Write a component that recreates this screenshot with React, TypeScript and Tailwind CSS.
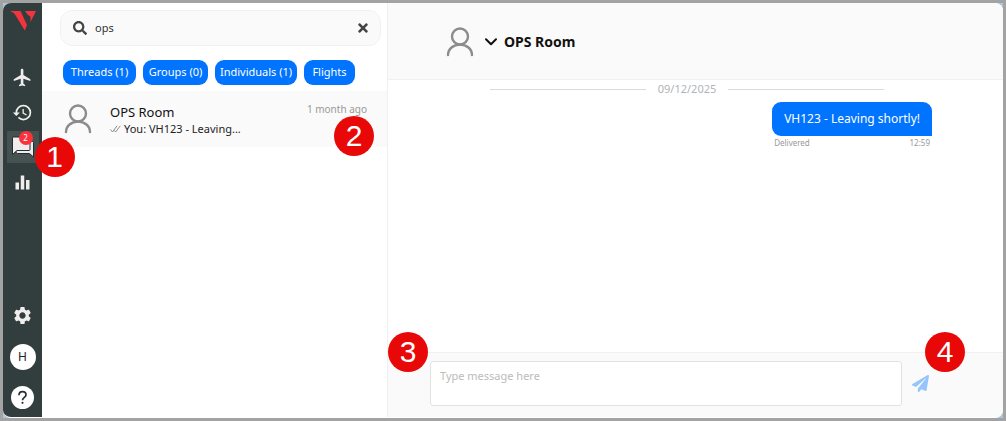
import { type ReactNode } from 'react';
import { MdEqualizer, MdFlight, MdHistory, MdSettings } from 'react-icons/md';
import { FaPaperPlane, FaSearch, FaTimes } from 'react-icons/fa';

const filters = [
  { label: 'Threads (1)', width: 'w-[73px]' },
  { label: 'Groups (0)', width: 'w-[65px]' },
  { label: 'Individuals (1)', width: 'w-[82px]' },
  { label: 'Flights', width: 'w-[51px]' },
];

const Marker = ({ children, className }: { children: ReactNode; className: string }) => (
  <span
    className={`absolute z-10 flex size-10 items-center justify-center rounded-full bg-[#e80808] font-['Liberation_Sans',sans-serif] text-[30px] leading-none text-white ${className}`}
  >
    {children}
  </span>
);

const PersonIcon = () => (
  <svg width="28" height="30" viewBox="0 0 28 30" fill="none" stroke="#8c8c8c" strokeWidth="2.4" strokeLinecap="round" className="shrink-0">
    <circle cx="14" cy="9.5" r="8" />
    <path d="M2 28c0-6.2 5.400-10.400 12-10.400S26 21.800 26 28" />
  </svg>
);

const Logo = () => (
  <svg width="26" height="20" viewBox="0 0 26 20" fill="#f5333f" aria-hidden="true">
    <path d="M0 0h10.500L17 14l-2.200 5.500L5.500 4.200C4.400 2.300 2.800 1.200 0 0z" />
    <path d="M15 0h11l-5.500 11V5.800L17.500 3.500z" />
  </svg>
);

const ChatIcon = () => (
  <svg width="24" height="22" viewBox="0 0 24 22" fill="#f0eeec" stroke="#222b33" strokeWidth="1" strokeLinejoin="round">
    <path d="M5 5.500h16.500q1 0 1 1V21l-4-3.500H6.500q-1.500 0-1.500-1.500z" />
    <path d="M2.500 1h15.500q1 0 1 1v11.500q0 1-1 1H6l-4.500 4V2q0-1 1-1z" />
  </svg>
);

const QuestionIcon = () => (
  <svg width="15" height="15" viewBox="0 0 15 15" fill="none" stroke="#263232" strokeWidth="1.700">
    <path d="M4 5.200C4 3 5.500 1.700 7.500 1.700S11 3 11 4.900c0 2.300-3.500 2.700-3.500 5.300" />
    <circle cx="7.500" cy="12.800" r="1.100" fill="#263232" stroke="none" />
  </svg>
);

const DoubleCheck = () => (
  <svg width="11" height="8" viewBox="0 0 11 8" fill="none" stroke="#8a8a8a" strokeWidth="1" className="shrink-0">
    <path d="M.5 4.500 2.500 7 7 .8M4.500 5.500 5.600 7 10.300.8" />
  </svg>
);

const Sidebar = () => (
  <nav className="flex w-[39px] shrink-0 flex-col items-center bg-[#323e3e] pt-2 pb-2 text-[#f0eeec]">
    <Logo />
    <div className="mt-[30px] flex flex-col items-center gap-[3px]">
      <button title="Flights" className="flex size-8 items-center justify-center">
        <MdFlight size={21} />
      </button>
      <button title="History" className="flex size-8 items-center justify-center">
        <MdHistory size={21} />
      </button>
      <div className="relative">
        <button title="Messages" className="flex size-8 items-center justify-center bg-[#465151]">
          <ChatIcon />
          <span className="absolute top-0 left-3 flex size-[14px] items-center justify-center rounded-full bg-[#fb323c] text-[8px] leading-none text-white">
            2
          </span>
        </button>
        <Marker className="top-[6px] left-7">1</Marker>
      </div>
      <button title="Statistics" className="flex size-8 items-center justify-center">
        <MdEqualizer size={21} />
      </button>
    </div>
    <div className="mt-auto flex flex-col items-center gap-4">
      <button title="Settings" className="pb-[2px]">
        <MdSettings size={21} />
      </button>
      <button
        title="Account"
        className="flex size-[26px] items-center justify-center rounded-full bg-white text-xs text-[#222]"
      >
        H
      </button>
      <button title="Help" className="flex size-[23px] items-center justify-center rounded-full bg-white">
        <QuestionIcon />
      </button>
    </div>
  </nav>
);

const ThreadList = () => (
  <section className="flex w-[346px] shrink-0 flex-col border-r border-[#f0f0f0]">
    <div className="mt-[7px] mr-[6px] ml-[18px] flex h-9 items-center gap-2 rounded-xl border border-[#f1f1f1] bg-[#fafafa] pr-[10px] pl-3">
      <FaSearch size={14} className="shrink-0 text-[#444]" />
      <input
        aria-label="Search"
        defaultValue="ops"
        className="min-w-0 flex-1 bg-transparent text-[11px] text-[#333] outline-none"
      />
      <button title="Clear search">
        <FaTimes size={14} className="text-[#444]" />
      </button>
    </div>

    <div className="mt-[14px] flex gap-[7px] px-[21px]">
      {filters.map((filter) => (
        <button
          key={filter.label}
          className={`h-[25px] rounded-[9px] bg-[#0073ff] text-[11px] whitespace-nowrap text-white ${filter.width}`}
        >
          {filter.label}
        </button>
      ))}
    </div>

    <div className="relative mt-[6px] flex h-14 bg-[#fafafa] pt-[13px] pr-5 pl-[22px]">
      <PersonIcon />
      <div className="ml-[18px] flex flex-1 flex-col">
        <span className="text-[13px] leading-4 text-[#111]">OPS Room</span>
        <span className="flex items-center gap-[3px] text-[11px] leading-[18px] text-[#222]">
          <DoubleCheck />
          You: VH123 - Leaving...
        </span>
      </div>
      <span className="text-[10px] leading-[10px] text-[#999]">1 month ago</span>
      <Marker className="top-[25px] right-[13px]">2</Marker>
    </div>
  </section>
);

const Conversation = () => (
  <main className="flex min-w-0 flex-1 flex-col">
    <header className="flex h-[77px] shrink-0 items-center border-b border-[#f0f0f0] bg-[#fafafa] pt-[2px] pl-[58px]">
      <PersonIcon />
      <button title="Room details" className="ml-[11px]">
        <svg width="12" height="8" viewBox="0 0 12 8" fill="none" stroke="#111" strokeWidth="2" strokeLinecap="round" strokeLinejoin="round">
          <path d="m1 1.200 5 5 5-5" />
        </svg>
      </button>
      <h1 className="ml-[7px] text-sm font-bold text-[#111]">OPS Room</h1>
    </header>

    <div className="flex flex-1 flex-col pr-[71px] pl-[102px]">
      <div className="mr-12 flex items-center gap-3 text-[11px] leading-[18px] text-[#b0b3b8]">
        <span className="h-px flex-1 bg-[#d8dade]" />
        09/12/2025
        <span className="h-px flex-1 bg-[#d8dade]" />
      </div>
      <div className="mt-1 self-end">
        <p className="rounded-[9px] rounded-br-none bg-[#0073ff] px-3 py-2 text-[12px] leading-[18px] text-white">
          VH123 - Leaving shortly!
        </p>
        <div className="flex justify-between px-[2px] text-[8px] leading-[14px] text-[#999]">
          <span>Delivered</span>
          <span>12:59</span>
        </div>
      </div>
    </div>

    <footer className="relative flex h-[65px] shrink-0 items-start border-t border-[#f0f0f0] bg-[#fafafa] pt-2 pl-[42px]">
      <Marker className="-top-[21px] left-0">3</Marker>
      <textarea
        aria-label="Message"
        placeholder="Type message here"
        className="h-[45px] min-w-0 flex-1 resize-none rounded-[3px] border border-[#e2e2e2] bg-white px-[9px] py-[6px] text-[11px] leading-4 outline-none placeholder:text-[#bbb]"
      />
      <button title="Send" className="mt-[14px] mr-[74px] ml-[10px]">
        <FaPaperPlane size={17} className="text-[#96c4fc]" />
      </button>
      <Marker className="-top-[21px] right-[38px]">4</Marker>
    </footer>
  </main>
);

export default function App() {
  return (
    <div className="h-screen bg-[#a3a3a3] p-[3px] font-['Noto_Sans','Open_Sans',sans-serif]">
      <div className="h-full bg-[#a9c9d8]">
        <div className="flex h-full overflow-hidden rounded-lg border-b border-white bg-white">
          <Sidebar />
          <ThreadList />
          <Conversation />
        </div>
      </div>
    </div>
  );
}
